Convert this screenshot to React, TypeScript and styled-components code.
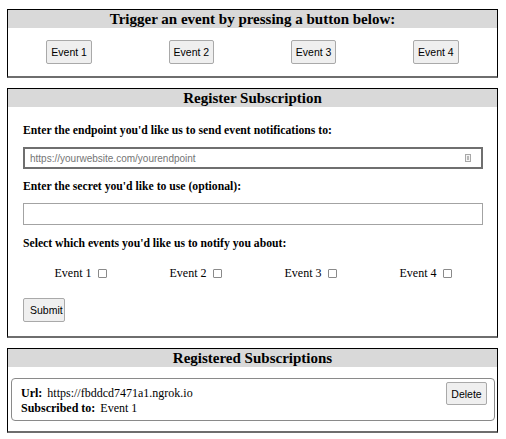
import styled, { createGlobalStyle } from 'styled-components';

const events = ['Event 1', 'Event 2', 'Event 3', 'Event 4'];

const GlobalStyle = createGlobalStyle`
  body {
    margin: 0;
    background: #fff;
    font-family: 'Liberation Serif', 'Times New Roman', serif;
    color: #000;
  }
`;

const App = () => {
  return (
    <Page>
      <GlobalStyle />
      <Panel>
        <PanelTitle>Trigger an event by pressing a button below:</PanelTitle>
        <TriggerRow>
          {events.map((e) => (
            <SmallButton key={e}>{e}</SmallButton>
          ))}
        </TriggerRow>
      </Panel>

      <Panel>
        <PanelTitle>Register Subscription</PanelTitle>
        <Form onSubmit={(e) => e.preventDefault()}>
          <Label $top={16}>Enter the endpoint you'd like us to send event notifications to:</Label>
          <InputWrap>
            <TextInput $focused placeholder="https://yourwebsite.com/yourendpoint" />
            <AutofillIcon width="6" height="8" viewBox="0 0 6 8">
              <rect x="0.5" y="0.5" width="5" height="7" fill="#f4f4f4" stroke="#a8a8a8" />
              <rect x="2" y="2" width="2" height="4" fill="#b8b8b8" />
            </AutofillIcon>
          </InputWrap>
          <Label $top={10}>Enter the secret you'd like to use (optional):</Label>
          <TextInput />
          <Label $top={11}>Select which events you'd like us to notify you about:</Label>
          <CheckRow>
            {events.map((e) => (
              <CheckItem key={e}>
                {e}
                <Box type="checkbox" />
              </CheckItem>
            ))}
          </CheckRow>
          <SmallButton type="submit" $width={42}>
            Submit
          </SmallButton>
        </Form>
      </Panel>

      <Panel>
        <PanelTitle>Registered Subscriptions</PanelTitle>
        <SubCard>
          <SubInfo>
            <InfoLine>
              <b>Url:</b>https://fbddcd7471a1.ngrok.io
            </InfoLine>
            <InfoLine>
              <b>Subscribed to:</b>Event 1
            </InfoLine>
          </SubInfo>
          <DeleteButton>Delete</DeleteButton>
        </SubCard>
      </Panel>
    </Page>
  );
};

export default App;

const Page = styled.div`
  width: 491px;
  padding: 9px 7px 0;
  display: flex;
  flex-direction: column;
  gap: 10px;
`;

const Panel = styled.section`
  border: 1px solid #000;
  border-bottom: 2px solid #6e6e6e;
`;

const PanelTitle = styled.div`
  background: #d9d9d9;
  height: 18px;
  line-height: 18px;
  text-align: center;
  font-size: 15px;
  font-weight: bold;
`;

const TriggerRow = styled.div`
  display: grid;
  grid-template-columns: repeat(4, 1fr);
  justify-items: center;
  padding: 12px 0;
`;

const SmallButton = styled.button<{ $width?: number }>`
  height: 24px;
  ${(p) => (p.$width ? `width: ${p.$width}px;` : 'padding: 0 4px;')}
  font-family: 'Liberation Sans', Arial, sans-serif;
  font-size: 10.5px;
  color: #000;
  background: #efefef;
  border: 1px solid #a9a9a9;
  border-radius: 2px;
`;

const Form = styled.form`
  padding: 0 14px 14px 15px;
  display: flex;
  flex-direction: column;
  align-items: flex-start;
`;

const Label = styled.div<{ $top: number }>`
  margin: ${(p) => p.$top}px 0 9px;
  font-size: 11.7px;
  line-height: 15px;
  font-weight: bold;
`;

const InputWrap = styled.div`
  position: relative;
  width: 100%;
`;

const TextInput = styled.input<{ $focused?: boolean }>`
  box-sizing: border-box;
  width: 100%;
  height: 22px;
  margin: 0;
  padding: 0 5px;
  font-family: 'Liberation Sans', Arial, sans-serif;
  font-size: 10px;
  border: ${(p) => (p.$focused ? '2px solid #6f6f6f' : '1px solid #a3a3a3')};
  outline: none;

  &::placeholder {
    color: #757575;
  }
`;

const AutofillIcon = styled.svg`
  position: absolute;
  right: 12px;
  top: 7px;
`;

const CheckRow = styled.div`
  width: 100%;
  display: grid;
  grid-template-columns: repeat(4, 1fr);
  justify-items: center;
  margin: 5px 0 17px;
`;

const CheckItem = styled.label`
  display: flex;
  align-items: center;
  font-size: 12px;
  line-height: 16px;
`;

const Box = styled.input`
  appearance: none;
  width: 9px;
  height: 9px;
  margin: 0 0 0 6px;
  border: 1px solid #8a8a8a;
  border-radius: 1px;
  background: #fff;
`;

const SubCard = styled.div`
  margin: 11px 2px 10px 3px;
  border: 1px solid #8a8a8a;
  border-radius: 4px;
  display: flex;
  justify-content: space-between;
  align-items: flex-start;
  padding: 0 7px 0 9px;
`;

const SubInfo = styled.div`
  padding: 7px 0 4px;
`;

const InfoLine = styled.div`
  font-size: 12px;
  line-height: 15px;

  b {
    margin-right: 5px;
  }
`;

const DeleteButton = styled(SmallButton)`
  margin-top: 3px;
  height: 23px;
  width: 41px;
  padding: 0;
`;
